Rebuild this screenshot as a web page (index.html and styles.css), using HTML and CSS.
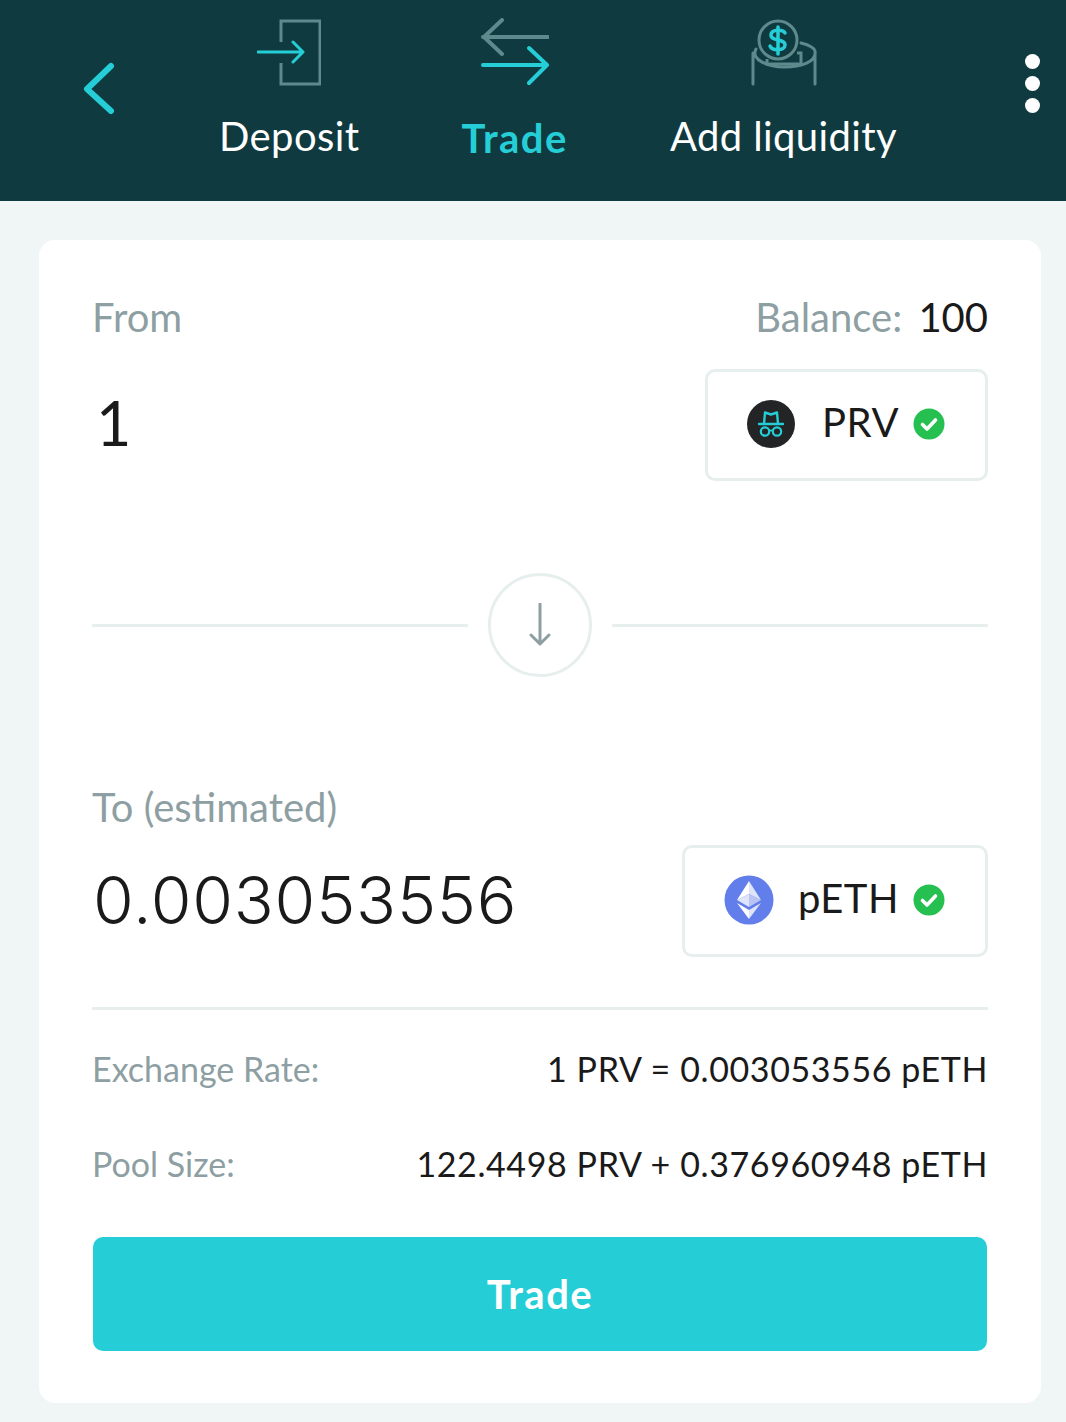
FILE: index.html
```html
<!DOCTYPE html>
<html lang="en">
<head>
  <meta charset="UTF-8">
  <title>Trade</title>
  <link rel="stylesheet" href="styles.css">
</head>
<body>
  <header class="top-bar">
    <svg class="back-icon" width="32" height="52" viewBox="0 0 32 52">
      <path d="M28 4 L4 27 L28 49" fill="none" stroke="#25cdd6" stroke-width="6" stroke-linecap="round" stroke-linejoin="round"/>
    </svg>
    <nav class="tabs">
      <div class="tab">
        <svg class="tab-icon" width="64" height="68" viewBox="0 0 64 68">
          <path d="M24 24 V3 H63 V66 H24 V45" fill="none" stroke="#5f8a8d" stroke-width="3"/>
          <path d="M1 34 H45 M36 24 L46 34 L36 44" fill="none" stroke="#25cdd6" stroke-width="3" stroke-linecap="round" stroke-linejoin="round"/>
        </svg>
        <span>Deposit</span>
      </div>
      <div class="tab active">
        <svg class="tab-icon" width="68" height="68" viewBox="0 0 68 68">
          <path d="M67 19 H2 M21 2 L3 19 L21 36" fill="none" stroke="#5f8a8d" stroke-width="4" stroke-linecap="round" stroke-linejoin="round"/>
          <path d="M2 47 H66 M48 30 L66 47 L48 65" fill="none" stroke="#25cdd6" stroke-width="4" stroke-linecap="round" stroke-linejoin="round"/>
        </svg>
        <span>Trade</span>
      </div>
      <div class="tab">
        <svg class="tab-icon" width="66" height="68" viewBox="0 0 66 68">
          <circle cx="27" cy="22" r="19" fill="none" stroke="#5f8a8d" stroke-width="3"/>
          <path d="M5 31 C-1 42 18 49 33 49 C50 49 66 44 64 33 C63 29 58 27 50 25 M64 35 V66 M2 35 V66" fill="none" stroke="#5f8a8d" stroke-width="3" stroke-linecap="round"/>
          <path d="M16 41 V46 H50 V35 H46" fill="none" stroke="#5f8a8d" stroke-width="3"/>
          <path d="M34 15 C32 11 20 11 20 17 C20 24 34 20 34 27 C34 33 21 33 19 28 M27 9 V36" fill="none" stroke="#25cdd6" stroke-width="3.5" stroke-linecap="round"/>
        </svg>
        <span>Add liquidity</span>
      </div>
    </nav>
    <div class="more">
      <i></i><i></i><i></i>
    </div>
  </header>

  <main class="card">
    <div class="labels">
      <span class="muted">From</span>
      <span class="muted">Balance: <b class="balance">100</b></span>
    </div>
    <div class="amount-row first">
      <span class="amount small">1</span>
      <div class="token">
        <svg width="48" height="48" viewBox="0 0 48 48">
          <circle cx="24" cy="24" r="24" fill="#222425"/>
          <path d="M17 24 L18 12.5 L24 14.5 L30 12.5 L31 24 M12 24 H36" fill="none" stroke="#25cdd6" stroke-width="2.4" stroke-linecap="round" stroke-linejoin="round"/>
          <circle cx="18" cy="31.5" r="4.2" fill="none" stroke="#25cdd6" stroke-width="2.2"/>
          <circle cx="30" cy="31.5" r="4.2" fill="none" stroke="#25cdd6" stroke-width="2.2"/>
          <path d="M22 30.5 H26" fill="none" stroke="#25cdd6" stroke-width="1.8"/>
        </svg>
        <span class="token-name">PRV</span>
        <svg width="32" height="32" viewBox="0 0 32 32">
          <circle cx="16" cy="16" r="15.5" fill="#25c050"/>
          <path d="M9.5 16.5 L14 21 L22.5 12" fill="none" stroke="#fff" stroke-width="3.6" stroke-linecap="round" stroke-linejoin="round"/>
        </svg>
      </div>
    </div>

    <div class="divider-row">
      <div class="line"></div>
      <div class="swap">
        <svg width="24" height="44" viewBox="0 0 24 44">
          <path d="M12 1 V41 M3 32 L12 41 L21 32" fill="none" stroke="#8e9fa3" stroke-width="3" stroke-linecap="round" stroke-linejoin="round"/>
        </svg>
      </div>
      <div class="line"></div>
    </div>

    <div class="labels to">
      <span class="muted">To (estimated)</span>
    </div>
    <div class="amount-row second">
      <span class="amount">0.003053556</span>
      <div class="token eth">
        <svg width="50" height="50" viewBox="0 0 50 50">
          <circle cx="25" cy="25" r="24.5" fill="#627eea"/>
          <path d="M25 6 V19 L37 25 Z" fill="#dfe4fb"/>
          <path d="M25 6 V19 L13 25 Z" fill="#fff"/>
          <path d="M25 19 L37 25 L25 32 Z" fill="#b9c4f5"/>
          <path d="M25 19 L13 25 L25 32 Z" fill="#dfe4fb"/>
          <path d="M25 35 V44 L37 28 Z" fill="#dfe4fb"/>
          <path d="M25 35 V44 L13 28 Z" fill="#fff"/>
        </svg>
        <span class="token-name">pETH</span>
        <svg width="32" height="32" viewBox="0 0 32 32">
          <circle cx="16" cy="16" r="15.5" fill="#25c050"/>
          <path d="M9.5 16.5 L14 21 L22.5 12" fill="none" stroke="#fff" stroke-width="3.6" stroke-linecap="round" stroke-linejoin="round"/>
        </svg>
      </div>
    </div>

    <div class="info">
      <div class="info-row">
        <span class="muted">Exchange Rate:</span>
        <span class="value">1 PRV = 0.003053556 pETH</span>
      </div>
      <div class="info-row">
        <span class="muted">Pool Size:</span>
        <span class="value">122.4498 PRV + 0.376960948 pETH</span>
      </div>
    </div>

    <button class="trade-btn">Trade</button>
  </main>
</body>
</html>
```

FILE: styles.css
```css
/* General Styles */
body {
  font-family: 'Lato', sans-serif;
  background-color: #f0f5f5;
  color: #1a1a1a;
  margin: 0;
  padding: 0;
  height: 1422px;
  overflow: hidden;
}

.top-bar {
  display: flex;
  align-items: flex-start;
  height: 201px;
  padding-left: 83px;
  background-color: #0f3a3f;
}

.back-icon {
  margin-top: 62px;
}

.tabs {
  display: flex;
  gap: 102px;
  margin-left: 104px;
  padding-top: 18px;
}

.tab {
  display: flex;
  flex-direction: column;
  align-items: center;
  color: #fff;
  font-size: 40px;
  letter-spacing: 0.4px;
}

.tab-icon {
  margin-bottom: 26px;
}

.tab.active {
  color: #25cdd6;
  font-weight: 700;
  letter-spacing: 1.5px;
}

.tab.active span {
  margin-top: 2px;
}

.more {
  display: flex;
  flex-direction: column;
  gap: 7px;
  margin: 54px 0 0 128px;
}

.more i {
  width: 15px;
  height: 15px;
  border-radius: 50%;
  background-color: #fff;
}

.card {
  margin: 39px 25px 0 39px;
  padding: 53px;
  height: 1163px;
  box-sizing: border-box;
  background-color: #fff;
  border-radius: 16px;
}

.labels {
  display: flex;
  justify-content: space-between;
  font-size: 40px;
  line-height: 48px;
}

.muted {
  color: #8e9fa3;
}

.balance {
  color: #1a1a1a;
  font-weight: 400;
  margin-left: 6px;
}

.amount-row {
  display: flex;
  justify-content: space-between;
  align-items: center;
}

.amount-row.first {
  margin-top: 28px;
}

.amount {
  font-family: 'Inter', sans-serif;
  font-size: 66px;
  font-weight: 350;
  letter-spacing: 0.8px;
  padding-left: 1px;
  margin-bottom: 2px;
}

.amount.small {
  font-family: 'Lato', sans-serif;
  font-size: 61px;
  font-weight: 400;
  padding-left: 4px;
  margin-bottom: 6px;
}

.token {
  display: flex;
  align-items: center;
  height: 112px;
  box-sizing: border-box;
  padding: 0 40px 3px 39px;
  border: 3px solid #e6eeee;
  border-radius: 10px;
}

.token-name {
  font-size: 40px;
  letter-spacing: 0.5px;
  margin: 0 14px 4px 27px;
}

.token.eth .token-name {
  margin-left: 24px;
}

.divider-row {
  display: flex;
  align-items: center;
  margin-top: 92px;
}

.line {
  flex: 1;
  height: 3px;
  background-color: #e6eeee;
}

.swap {
  display: flex;
  align-items: center;
  justify-content: center;
  width: 104px;
  height: 104px;
  box-sizing: border-box;
  margin: 0 20px;
  border: 3px solid #e6eeee;
  border-radius: 50%;
}

.labels.to {
  margin-top: 106px;
}

.amount-row.second {
  margin-top: 14px;
  padding-bottom: 50px;
  border-bottom: 3px solid #e6eeee;
}

.info {
  display: flex;
  flex-direction: column;
  gap: 51px;
  margin-top: 37px;
}

.info-row {
  display: flex;
  justify-content: space-between;
  font-size: 34px;
  line-height: 44px;
}

.value {
  letter-spacing: 0.6px;
}

.trade-btn {
  display: block;
  width: calc(100% - 2px);
  height: 114px;
  margin: 51px 0 0 1px;
  border: none;
  border-radius: 10px;
  background-color: #25cdd6;
  color: #fff;
  font-family: 'Lato', sans-serif;
  font-size: 40px;
  font-weight: 700;
  letter-spacing: 1.5px;
}
```
